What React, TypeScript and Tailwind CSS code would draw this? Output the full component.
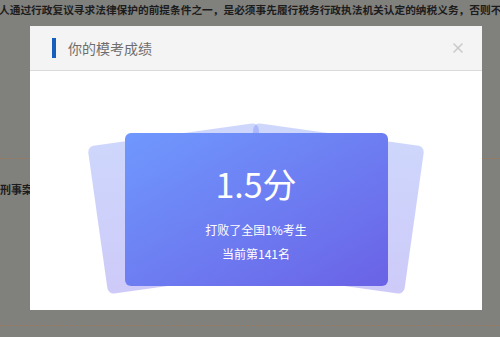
import { X } from "lucide-react";

const font = { fontFamily: '"Noto Sans CJK SC", "Noto Sans", sans-serif' };

function BackCard({ side }: { side: "left" | "right" }) {
  return (
    <div
      className={
        side === "left"
          ? "absolute left-[67px] top-[63px] w-[172px] h-[149px] rounded-[6px] -rotate-8 bg-gradient-to-b from-[#5b77f5]/30 to-[#5a4eea]/30"
          : "absolute left-[213px] top-[63px] w-[172px] h-[149px] rounded-[6px] rotate-8 bg-gradient-to-b from-[#5b77f5]/30 to-[#5a4eea]/30"
      }
    />
  );
}

export default function App() {
  return (
    <div
      className="relative w-[500px] h-[337px] overflow-hidden bg-[#80807c] text-[#1c1c1c]"
      style={font}
    >
      {/* page behind the mask */}
      <p className="pt-[3px] -ml-[1px] w-[520px] whitespace-nowrap text-[10.7px] leading-[14px] font-bold">
        人通过行政复议寻求法律保护的前提条件之一，是必须事先履行税务行政执法机关认定的纳税义务，否则不予
      </p>
      <div className="mt-[141px] border-t border-dashed border-[#98795e]" />
      <p className="mt-[24px] text-[11px] leading-[12px] font-bold whitespace-nowrap">刑事案件</p>
      <div className="mt-[130px] border-t border-dashed border-[#98795e]" />

      {/* modal */}
      <div className="absolute left-[30px] top-[26px] w-[452px] h-[284px] bg-white flex flex-col">
        <div className="h-[45px] shrink-0 bg-[#f4f4f4] border-b border-[#d8dadc] flex items-center pl-[22px] pr-[16px]">
          <span className="w-[4px] h-[20px] bg-[#1560bd]" />
          <span className="ml-[12px] text-[14px] text-[#6e6e6e]">你的模考成绩</span>
          <X className="ml-auto text-[#cacaca]" size={16} strokeWidth={2.4} />
        </div>
        <div className="relative flex-1 flex justify-center pt-[62px]">
          <BackCard side="left" />
          <BackCard side="right" />
          <div className="relative z-10 w-[263px] h-[153px] rounded-[6px] bg-gradient-to-br from-[#6f98fd] to-[#6a62e6] flex flex-col items-center text-white">
            <div className="mt-[34px] text-[34px] leading-[34px]">1.5分</div>
            <div className="mt-[21px] text-[12px] leading-[16px]">打败了全国1%考生</div>
            <div className="mt-[8px] text-[12px] leading-[16px]">当前第141名</div>
          </div>
        </div>
      </div>
    </div>
  );
}
